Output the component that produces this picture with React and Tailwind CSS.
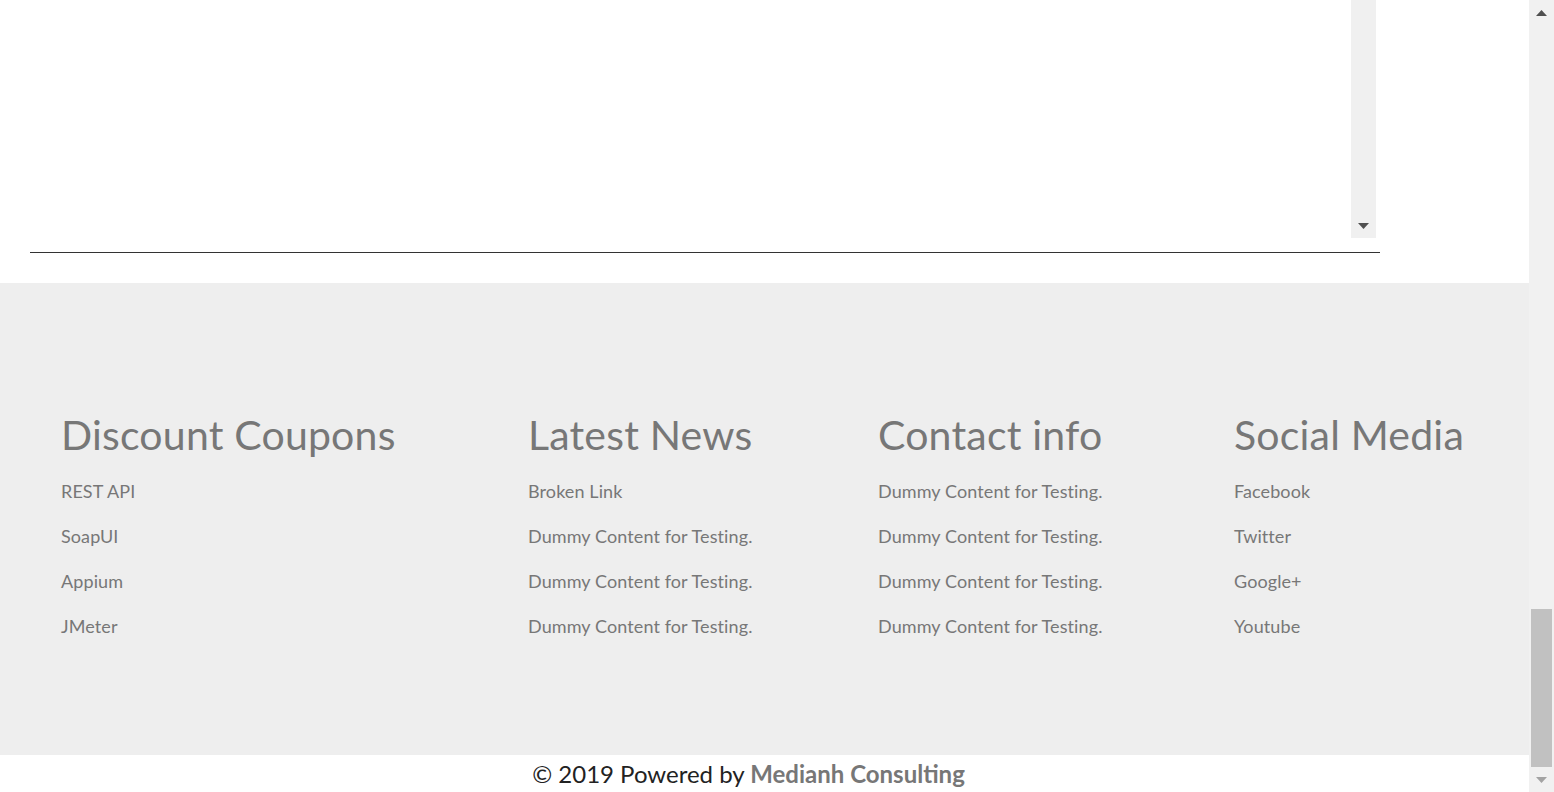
const columns = [
  { title: "Discount Coupons", width: "w-[467px]", items: ["REST API", "SoapUI", "Appium", "JMeter"] },
  { title: "Latest News", width: "w-[350px]", items: ["Broken Link", "Dummy Content for Testing.", "Dummy Content for Testing.", "Dummy Content for Testing."] },
  { title: "Contact info", width: "w-[356px]", items: ["Dummy Content for Testing.", "Dummy Content for Testing.", "Dummy Content for Testing.", "Dummy Content for Testing."] },
  { title: "Social Media", width: "flex-1", items: ["Facebook", "Twitter", "Google+", "Youtube"] },
];

function TriUp({ color }) {
  return (
    <svg width="11" height="6" viewBox="0 0 11 6">
      <polygon points="0,6 11,6 5.5,0" fill={color} />
    </svg>
  );
}

function TriDown({ color }) {
  return (
    <svg width="11" height="6" viewBox="0 0 11 6">
      <polygon points="0,0 11,0 5.5,6" fill={color} />
    </svg>
  );
}

export default function App() {
  return (
    <div className="flex h-[792px] w-[1554px] overflow-hidden bg-white" style={{ fontFamily: "Lato, 'Liberation Sans', sans-serif" }}>
      <div className="flex w-[1529px] flex-col">
        {/* top area */}
        <div className="h-[283px] px-[30px]">
          <div className="flex h-[238px] w-[1346px] justify-end">
            <div className="flex h-full w-[25px] flex-col items-center justify-end bg-[#f0f0f0] pb-[9px]">
              <TriDown color="#505050" />
            </div>
          </div>
          <div className="mt-[14px] w-[1350px] border-t border-[#333]" />
        </div>

        {/* footer */}
        <div className="flex h-[472px] bg-[#eeeeee] pl-[61px] pt-[127px]">
          {columns.map((col) => (
            <div key={col.title} className={col.width}>
              <h3 className="text-[41px] leading-[49px] tracking-[0.2px] text-[#777777]">{col.title}</h3>
              <ul className="mt-[21px] flex flex-col gap-[23px]">
                {col.items.map((it, i) => (
                  <li key={i} className="text-[18px] leading-[22px] tracking-[0.1px] text-[#777777]">
                    {it}
                  </li>
                ))}
              </ul>
            </div>
          ))}
        </div>

        {/* copyright */}
        <div className="flex h-[37px] justify-center pr-[32px]">
          <p className="text-[24px] leading-[37px] text-[#222222]">
            © 2019 Powered by <span className="font-bold text-[#777777]">Medianh Consulting</span>
          </p>
        </div>
      </div>

      {/* fake browser scrollbar */}
      <div className="flex w-[25px] flex-col items-center bg-[#f1f1f1]">
        <div className="flex h-[25px] items-center justify-center">
          <TriUp color="#505050" />
        </div>
        <div className="flex-1" />
        <div className="h-[158px] w-[21px] bg-[#c1c1c1]" />
        <div className="flex h-[25px] items-center justify-center">
          <TriDown color="#a3a3a3" />
        </div>
      </div>
    </div>
  );
}
